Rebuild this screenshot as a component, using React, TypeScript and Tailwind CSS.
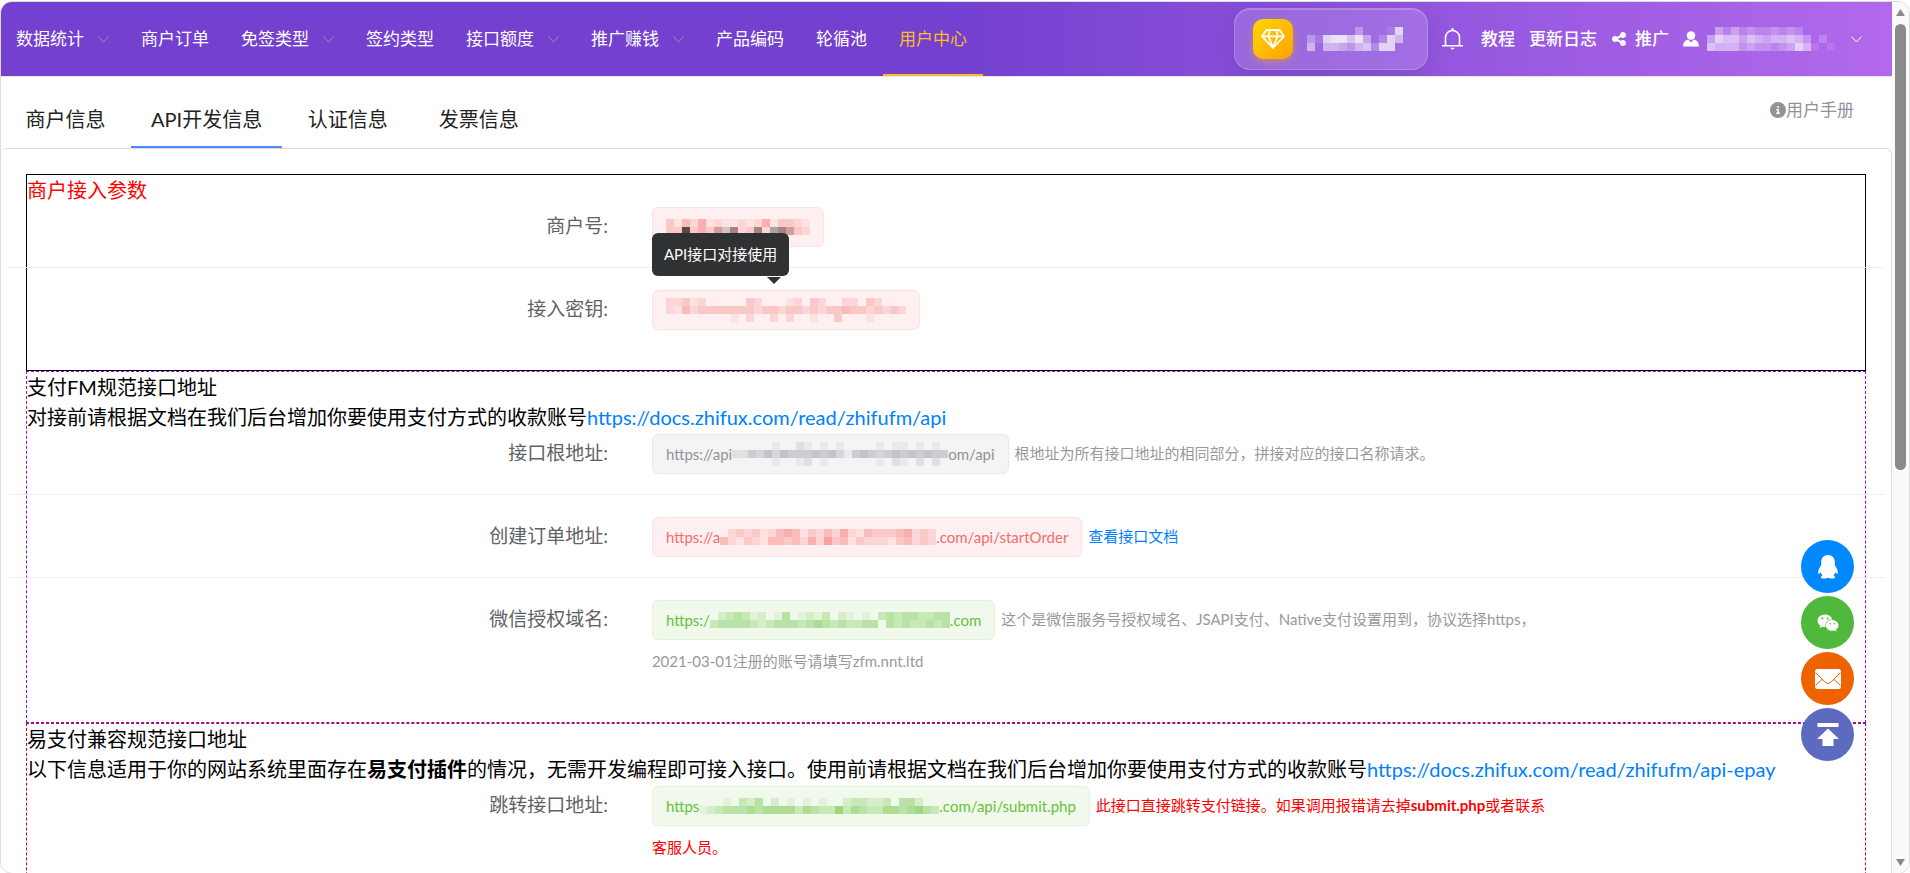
import type { ReactNode } from 'react';
import { FaWeixin, FaShareNodes, FaCircleInfo } from 'react-icons/fa6';

export default function MerchantApiPage() {
  return (
    <div
      lang="zh-CN"
      className="h-screen overflow-hidden bg-white pt-px text-black font-['Lato','Noto_Sans_CJK_SC',sans-serif]"
    >
      <div className="flex h-screen overflow-hidden rounded-xl border border-[#dcdcdc]">
        <div className="flex min-w-0 flex-1 flex-col">
          <Header />

          {/* Tabs */}
          <div className="flex h-[71px] shrink-0 items-end justify-between">
            <div role="tablist" className="-ml-px flex">
              {TABS.map((tab) => (
                <button
                  key={tab}
                  role="tab"
                  aria-selected={tab === ACTIVE_TAB}
                  className={`h-[60px] min-w-[131px] border-b-2 px-5 pt-1 text-xl text-[#222] ${
                    tab === ACTIVE_TAB ? 'border-[#4e88f9]' : 'border-transparent'
                  }`}
                >
                  {tab}
                </button>
              ))}
            </div>
            <a href="#manual" className="mr-[38px] mb-6 flex items-center text-[17px] leading-7 text-[#909399]">
              <FaCircleInfo className="size-4" />
              用户手册
            </a>
          </div>

          {/* Content */}
          <main className="flex-1 overflow-hidden rounded-t-md border-t border-r border-[#dcdcdc] px-[25px] pt-[25px]">
            <section className="border border-black pb-10">
              <h2 className="text-xl leading-[30px] text-[#f00]">商户接入参数</h2>
              <Row label="商户号">
                <Tag tone="danger">
                  <Mosaic rows={MERCHANT_MOSAIC} />
                </Tag>
              </Row>
              <Row label="接入密钥" last>
                <span className="relative inline-block align-top">
                  <Tag tone="danger">
                    <Mosaic rows={SECRET_MOSAIC} />
                  </Tag>
                  <span
                    role="tooltip"
                    className="absolute bottom-full left-0 mb-3 rounded-md bg-[#303133] px-3 text-[15px] leading-[43px] whitespace-nowrap text-white"
                  >
                    API接口对接使用
                    <svg className="absolute top-full right-2 mt-px h-[7px] w-[14px]" viewBox="0 0 14 7" fill="#303133">
                      <path d="M0 0h14L7 7z" />
                    </svg>
                  </span>
                </span>
              </Row>
            </section>

            <section className="border border-dashed border-[#8a0fe8] pb-10">
              <h2 className="text-xl leading-[30px]">支付FM规范接口地址</h2>
              <p className="text-xl leading-[30px]">
                对接前请根据文档在我们后台增加你要使用支付方式的收款账号
                <a href="#api" className="text-[#0080ff]">https://docs.zhifux.com/read/zhifufm/api</a>
              </p>
              <Row label="接口根地址">
                <Tag tone="info">
                  https://api
                  <Mosaic rows={ROOT_MOSAIC} />
                  om/api
                </Tag>{' '}
                <span className="text-[#999]">根地址为所有接口地址的相同部分，拼接对应的接口名称请求。</span>
              </Row>
              <Row label="创建订单地址">
                <Tag tone="danger">
                  https://a
                  <Mosaic rows={ORDER_MOSAIC} />
                  .com/api/startOrder
                </Tag>{' '}
                <a href="#order" className="text-[#0080ff]">查看接口文档</a>
              </Row>
              <Row label="微信授权域名" last>
                <Tag tone="success">
                  https:/
                  <Mosaic rows={WECHAT_MOSAIC} />
                  .com
                </Tag>{' '}
                <span className="text-[#999]">
                  这个是微信服务号授权域名、JSAPI支付、Native支付设置用到，协议选择https，
                  <br />
                  2021-03-01注册的账号请填写zfm.nnt.ltd
                </span>
              </Row>
            </section>

            <section className="border border-dashed border-[#c8003c] pb-10">
              <h2 className="text-xl leading-[30px]">易支付兼容规范接口地址</h2>
              <p className="text-xl leading-[30px]">
                以下信息适用于你的网站系统里面存在<b>易支付插件</b>
                的情况，无需开发编程即可接入接口。使用前请根据文档在我们后台增加你要使用支付方式的收款账号
                <a href="#epay" className="text-[#0080ff]">https://docs.zhifux.com/read/zhifufm/api-epay</a>
              </p>
              <Row label="跳转接口地址">
                <Tag tone="success">
                  https
                  <Mosaic rows={SUBMIT_MOSAIC} />
                  .com/api/submit.php
                </Tag>{' '}
                <span className="text-[#f00]">
                  此接口直接跳转支付链接。如果调用报错请去掉<b>submit.php</b>或者联系
                  <br />
                  客服人员。
                </span>
              </Row>
            </section>
          </main>
        </div>

        <ScrollRail />
      </div>

      <FloatingActions />
    </div>
  );
}

function Header() {
  return (
    <header className="flex h-[75px] shrink-0 items-center justify-between overflow-hidden border-b border-[#e6e6e6] bg-linear-to-r from-[#7440cf] from-50% to-[#b269ec] pr-[30px] text-[17px] text-white">
      <nav className="-ml-px flex h-full">
        {MENU.map((item) =>
          item.sub ? (
            <button key={item.name} className="flex items-center gap-3.5 px-4">
              {item.name}
              <Chevron className="w-[11px] text-[#9a93ad]" />
            </button>
          ) : (
            <a
              key={item.name}
              href="#menu"
              className={`flex items-center border-y-2 border-t-transparent px-4 ${
                item.active ? 'border-b-[#fbbf24] text-[#fbbf24]' : 'border-b-transparent'
              }`}
            >
              {item.name}
            </a>
          )
        )}
      </nav>

      <div className="flex items-center gap-3.5 font-medium">
        {/* VIP card */}
        <button className="flex h-[62px] w-[194px] items-center gap-3.5 rounded-2xl border border-white/20 bg-white/15 pl-[18px] shadow-[0_8px_24px_rgba(0,0,0,0.1),inset_0_1px_0_rgba(255,255,255,0.2)]">
          <span className="flex size-10 items-center justify-center rounded-[10px] bg-linear-135 from-[#ffd700] to-[#ffa000] shadow-[0_3px_8px_rgba(255,180,0,0.4)]">
            <svg className="h-5 w-6" viewBox="0 0 24 20" fill="none" stroke="currentColor" strokeWidth="1.8" strokeLinejoin="round">
              <path d="M5.500 1h13L23 7.300 12 19 1 7.300z" />
              <path d="M1 7.300h22M8.500 1 7.500 7.300 12 18.500l4.500-11.200L15.500 1" />
            </svg>
          </span>
          <Mosaic rows={VIP_MOSAIC} />
        </button>

        <button aria-label="通知" className="mr-1">
          <svg className="h-[22px] w-[21px]" viewBox="0 0 21 22" fill="none" stroke="currentColor" strokeWidth="1.600">
            <path d="M3.500 17.500V9.500a7 7 0 0 1 14 0v8M0 17.700h21" />
            <path d="M10.500 0v2.500" strokeWidth="2" />
            <path d="M8.500 19.800h4a2 1.800 0 0 1-4 0z" fill="currentColor" stroke="none" />
          </svg>
        </button>
        <a href="#guide">教程</a>
        <a href="#changelog">更新日志</a>
        <a href="#share" className="flex items-center gap-2">
          <FaShareNodes className="size-4" />
          推广
        </a>
        <button className="flex items-center gap-2">
          <svg className="size-4" viewBox="0 0 16 16" fill="currentColor">
            <circle cx="8" cy="4.500" r="4.300" />
            <path d="M0 15.500C0 11.500 2 9.300 5.300 8.500L8 11.500l2.700-3C14 9.300 16 11.500 16 15.500z" />
          </svg>
          <Mosaic rows={USER_MOSAIC} />
          <Chevron className="w-[11px]" />
        </button>
      </div>
    </header>
  );
}

function Chevron({ className }: { className: string }) {
  return (
    <svg className={className} viewBox="0 0 11 7" fill="none" stroke="currentColor">
      <path d="M.5.500 5.500 6l5-5.500" />
    </svg>
  );
}

function Row({ label, last, children }: { label: string; last?: boolean; children: ReactNode }) {
  return (
    <div className={last ? '' : '-mx-[19px] mb-5 border-b border-[#ebeef0] px-[19px] pb-5'}>
      <div className="flex leading-[42px]">
        <div className="w-[34%] shrink-0 pr-11 text-right text-[19px] text-[#606266]">{label}:</div>
        <div className="w-1/2 text-[15px]">{children}</div>
      </div>
    </div>
  );
}

function Tag({ tone, children }: { tone: 'info' | 'danger' | 'success'; children: ReactNode }) {
  const tones: Record<string, string> = {
    info: 'bg-[#f4f4f5] border-[#e9e9eb] text-[#909399]',
    danger: 'bg-[#fef0f0] border-[#fde2e2] text-[#f56c6c]',
    success: 'bg-[#f0f9eb] border-[#e1f3d8] text-[#67c23a]',
  };

  return (
    <span className={`mt-0.5 mr-0.5 inline-flex h-10 items-center rounded-md border px-[13px] align-top ${tones[tone]}`}>
      {children}
    </span>
  );
}

// Each character is one 8px cell: 1-9 tints the current color, letters are fixed shades
function Mosaic({ rows }: { rows: string[] }) {
  const cols = rows[0].length;
  const shades: Record<string, string> = { k: '#5c4a4b', b: '#a88384', g: '#a9a5a6', r: '#cf9fa0', s: '#d5c3c4' };

  return (
    <svg
      width={cols * 8}
      height={rows.length * 8}
      viewBox={`0 0 ${cols * 8} ${rows.length * 8}`}
      shapeRendering="crispEdges"
      className="shrink-0"
      aria-hidden="true"
    >
      {rows.map((row, y) =>
        [...row].map((cell, x) =>
          cell === '.' ? null : (
            <rect
              key={`${x}-${y}`}
              x={x * 8}
              y={y * 8}
              width="8"
              height="8"
              fill={shades[cell] ?? 'currentColor'}
              opacity={shades[cell] ? 1 : Number(cell) / 10}
            />
          )
        )
      )}
    </svg>
  );
}

function ScrollRail() {
  return (
    <div className="flex w-[17px] shrink-0 flex-col items-center bg-[#fafafa] pt-[7px] pb-[7px]">
      <svg className="h-[7px] w-[9px]" viewBox="0 0 9 7" fill="#8a8a8a">
        <path d="M4.500 0 9 7H0z" />
      </svg>
      <div className="mt-2 h-[52%] w-[11px] rounded-full bg-[#8a8a8a]"></div>
      <svg className="mt-auto h-[7px] w-[9px]" viewBox="0 0 9 7" fill="#8a8a8a">
        <path d="M0 0h9L4.500 7z" />
      </svg>
    </div>
  );
}

function FloatingActions() {
  return (
    <div className="fixed right-14 bottom-28 flex flex-col gap-[3px] text-white">
      <button aria-label="QQ" className="flex size-[53px] items-center justify-center rounded-full bg-[#0088ff]">
        <svg className="h-6 w-5" viewBox="0 0 20 24" fill="currentColor">
          <path d="M10 0C5.700 0 3.200 3.200 3.200 7v3.200C1.500 12.500.2 15 .2 17.200c0 1.400.5 2.100 1.100 1.500.5-.4.900-1 1.300-1.500.4 1.300 1 2.400 1.900 3.300-1.200.500-1.700 1.300-1.400 2.200.200.600 1 .900 2.900.900 1.900 0 3.200-.4 4-1.100.8.700 2.100 1.100 4 1.100 1.900 0 2.700-.3 2.900-.9.300-.900-.2-1.700-1.400-2.200.9-.9 1.500-2 1.900-3.300.4.500.8 1.100 1.300 1.500.6.600 1.100-.1 1.100-1.500 0-2.200-1.300-4.700-3-7V7C16.800 3.200 14.300 0 10 0z" />
        </svg>
      </button>
      <button aria-label="微信" className="flex size-[53px] items-center justify-center rounded-full bg-[#50b83c]">
        <FaWeixin className="size-[22px]" />
      </button>
      <button aria-label="邮件" className="flex size-[53px] items-center justify-center rounded-full bg-[#ee6200]">
        <svg className="h-5 w-[26px]" viewBox="0 0 26 20">
          <rect width="26" height="20" rx="2.500" fill="currentColor" />
          <path d="M.5 3.500 10.500 13.500q2.500 2 5 0L25.500 3.500M.5 16.500 7 10.500M25.500 16.500 19 10.500" fill="none" stroke="#ee6200" strokeWidth="1" />
        </svg>
      </button>
      <button aria-label="回到顶部" className="flex size-[53px] items-center justify-center rounded-full bg-[#5c6bc0]">
        <svg className="h-[23px] w-[22px]" viewBox="0 0 22 23" fill="currentColor">
          <path d="M.5 0h21v4H.5zM11 5.500 22 16h-5.500v7h-11v-7H0z" />
        </svg>
      </button>
    </div>
  );
}

const ACTIVE_TAB = 'API开发信息';
const TABS = ['商户信息', 'API开发信息', '认证信息', '发票信息'];

const MENU: { name: string; sub?: boolean; active?: boolean }[] = [
  { name: '数据统计', sub: true },
  { name: '商户订单' },
  { name: '免签类型', sub: true },
  { name: '签约类型' },
  { name: '接口额度', sub: true },
  { name: '推广赚钱', sub: true },
  { name: '产品编码' },
  { name: '轮循池' },
  { name: '用户中心', active: true },
];

// Masked values
const VIP_MOSAIC = [
  '......3...17',
  '31788684.275',
  '5.554356277.',
];
const USER_MOSAIC = [
  '.42423223232.....',
  '4766465455653.2..',
  '65553433234751.1.',
];
const MERCHANT_MOSAIC = [
  '314251211212513321',
  '33k353rsb23b2gbr32',
];
const SECRET_MOSAIC = [
  '22312.....32...12.32..22.32...',
  '214233333332332332323343323232',
  '........1.2..2.2..1..3...1....',
];
const ROOT_MOSAIC = [
  '.....1..21.1.1....1.11.1.1.',
  '224353544454531454345454544',
  '.....1..12.1......1.21.2.2.',
];
const ORDER_MOSAIC = [
  '.23231245413242521433345232',
  '421321443425263413222134232',
];
const WECHAT_MOSAIC = [
  '.234312.14.1213.21.1.343443344',
  '344443234443454343344.43433434',
];
const SUBMIT_MOSAIC = [
  '...1.324.2.1.1.1..233223.442..',
  '123444545555354336354335545643',
];
